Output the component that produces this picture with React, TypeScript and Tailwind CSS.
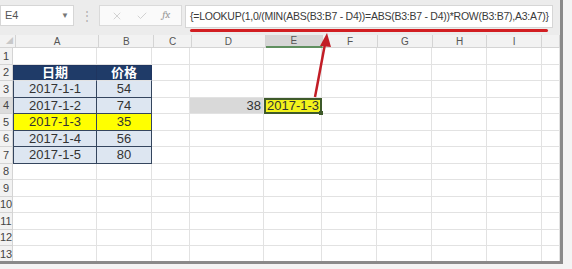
import { Check, X } from "lucide-react";

const FONT = { fontFamily: '"Liberation Sans", "Noto Sans CJK SC", Arial, sans-serif' };

const COLS = [
  { key: "A", w: "w-[84px]" },
  { key: "B", w: "w-[55px]" },
  { key: "C", w: "w-[38px]" },
  { key: "D", w: "w-[74px]" },
  { key: "E", w: "w-[58px]" },
  { key: "F", w: "w-[55px]" },
  { key: "G", w: "w-[55px]" },
  { key: "H", w: "w-[55px]" },
  { key: "I", w: "w-[55px]" },
  { key: "", w: "w-[18px]" },
];

const ROWS = [
  { date: "2017-1-1", price: "54" },
  { date: "2017-1-2", price: "74" },
  { date: "2017-1-3", price: "35", hit: true },
  { date: "2017-1-4", price: "56" },
  { date: "2017-1-5", price: "80" },
];

const FORMULA = "{=LOOKUP(1,0/(MIN(ABS(B3:B7 - D4))=ABS(B3:B7 - D4))*ROW(B3:B7),A3:A7)}";

function Toolbar() {
  return (
    <div className="flex h-[35px] items-start bg-[#ececec] pt-[5px]">
      <div className="flex h-[21px] w-[74px] items-center justify-between border border-[#d6d6d6] bg-white pl-[4px] pr-[4px]">
        <span className="text-[11px] text-[#555]">E4</span>
        <span className="text-[8px] text-[#777]">▼</span>
      </div>
      <div className="flex h-[21px] w-[25px] items-center justify-center text-[12px] text-[#b0b0b0]">⋮</div>
      <div className="flex h-[21px] w-[83px] items-center justify-around border border-[#dadada] bg-[#fafafa] px-[4px]">
        <X size={12} strokeWidth={1.5} className="text-[#c4c4c4]" />
        <Check size={12} strokeWidth={1.5} className="text-[#c4c4c4]" />
        <span className="font-serif text-[11px] italic text-[#999]">fx</span>
      </div>
      <div className="ml-[3px] flex h-[23px] w-[368px] items-center border border-[#d6d6d6] bg-white pl-[4px]">
        <span className="whitespace-nowrap text-[10.5px] tracking-[-0.25px] text-[#3a3a3a]">{FORMULA}</span>
      </div>
    </div>
  );
}

function HeaderRow() {
  return (
    <div className="flex h-[13px] bg-[#f2f2f2] text-[10px] text-[#555]">
      <div className="flex w-[16px] items-end justify-end border-b border-r border-[#d4d4d4] pb-[1px] pr-[2px] text-[7px] text-[#c8c8c8]">◢</div>
      {COLS.map((c) => (
        <div
          key={c.key || "x"}
          className={`${c.w} flex items-center justify-center border-r ${
            c.key === "E" ? "border-b-2 border-b-[#5f8f5f] border-r-[#d4d4d4] bg-[#d6d6d6]" : "border-b border-[#d4d4d4]"
          }`}
        >
          {c.key}
        </div>
      ))}
    </div>
  );
}

function Cell({ w, className = "", children }: { w: string; className?: string; children?: React.ReactNode }) {
  return <div className={`${w} flex shrink-0 items-center border-b border-r border-[#e2e2e2] ${className}`}>{children}</div>;
}

function SheetRow({ n }: { n: number }) {
  const data = n >= 3 && n <= 7 ? ROWS[n - 3] : null;
  return (
    <div className="flex h-[16.5px] text-[13px] text-[#333]">
      <div
        className={`flex w-[16px] items-center justify-center border-b border-r border-[#d4d4d4] text-[11px] text-[#444] ${
          n === 4 ? "bg-[#dcdcdc]" : "bg-[#f2f2f2]"
        }`}
      >
        {n}
      </div>
      {COLS.map((c) => {
        if (n === 2 && (c.key === "A" || c.key === "B")) {
          return (
            <Cell
              key={c.key}
              w={c.w}
              className={`justify-center border-t border-t-[#1f3560] bg-[#1f3b68] font-bold text-white ${
                c.key === "A" ? "border-l border-l-[#1f3560] border-r-[#1f3560]" : "border-r-[#1f3560]"
              }`}
            >
              {c.key === "A" ? "日期" : "价格"}
            </Cell>
          );
        }
        if (data && (c.key === "A" || c.key === "B")) {
          return (
            <Cell
              key={c.key}
              w={c.w}
              className={`justify-center border-b-[#34455e] border-r-[#34455e] ${data.hit ? "bg-[#ffff00]" : "bg-[#dde6f1]"} ${
                c.key === "A" ? "border-l border-l-[#34455e]" : ""
              }`}
            >
              {c.key === "A" ? data.date : data.price}
            </Cell>
          );
        }
        if (n === 4 && c.key === "D") {
          return (
            <Cell key={c.key} w={c.w} className="justify-end bg-[#d9d9d9] pr-[2px]">
              38
            </Cell>
          );
        }
        if (n === 4 && c.key === "E") {
          return (
            <div key={c.key} className={`${c.w} relative flex shrink-0 items-center justify-center border-2 border-[#3e5a2a] bg-[#f2f21c]`}>
              2017-1-3
              <span className="absolute -bottom-[3px] -right-[3px] h-[4px] w-[4px] bg-[#3e5a2a]" />
            </div>
          );
        }
        return <Cell key={c.key || "x"} w={c.w} />;
      })}
    </div>
  );
}

export default function App() {
  return (
    <div className="relative h-[269px] w-[572px] overflow-hidden bg-[#f4f4f4]" style={FONT}>
      <div className="h-[264px] w-[563px] overflow-hidden border-b-[3px] border-r-[3px] border-[#8a8a8a] bg-white">
        <Toolbar />
        <HeaderRow />
        {Array.from({ length: 13 }, (_, i) => (
          <SheetRow key={i} n={i + 1} />
        ))}
      </div>
      {/* annotation: red underline + arrow */}
      <div className="absolute left-[190px] top-[29px] h-[3px] w-[358px] rounded-full bg-[#d21e22]" />
      <svg className="absolute left-0 top-0" width="572" height="269">
        <line x1="315" y1="97" x2="325" y2="44" stroke="#c21d26" strokeWidth="2.5" />
        <polygon points="327,33 320,46 331,47" fill="#c21d26" />
      </svg>
    </div>
  );
}
